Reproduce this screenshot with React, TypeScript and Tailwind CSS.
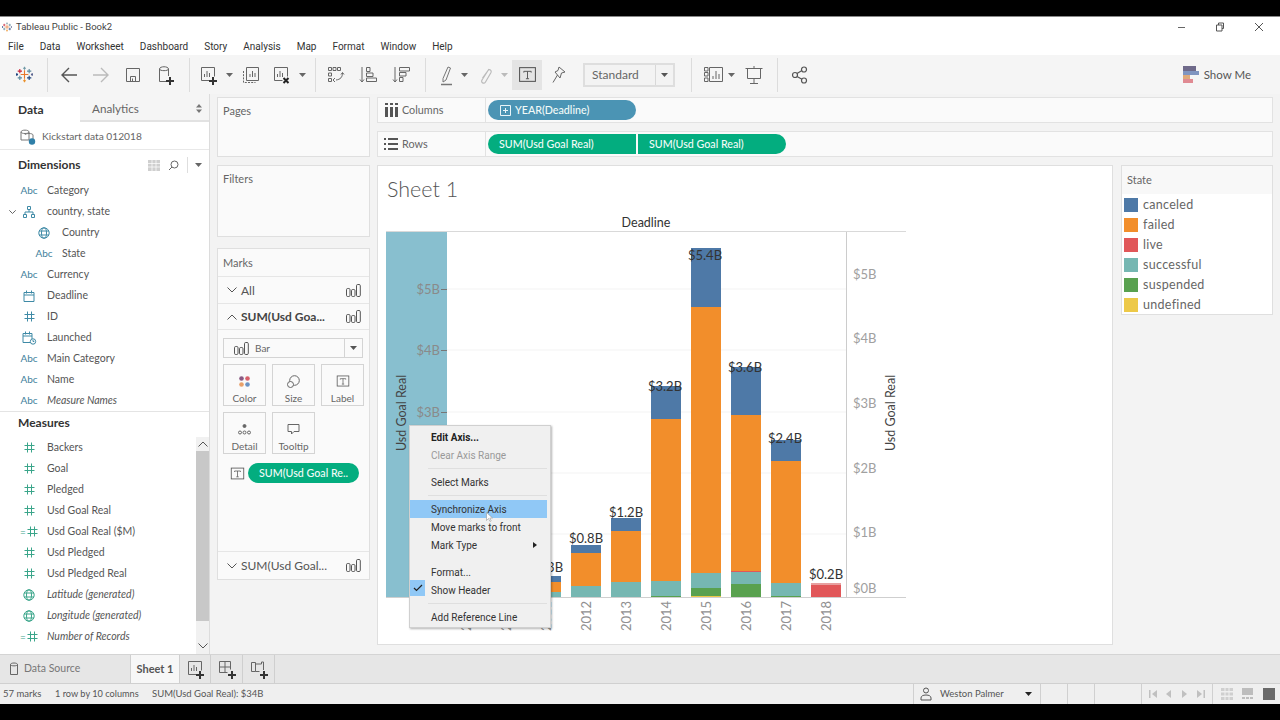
import React from "react";

const Ic = ({ w = 18, h = 18, vb = "0 0 18 18", c = "#555", sw = 1, children }: any) => (
  <svg width={w} height={h} viewBox={vb} fill="none" stroke={c} strokeWidth={sw} className="block shrink-0">{children}</svg>
);
const Caret = ({ c = "#666" }: { c?: string }) => (
  <svg width="7" height="4" viewBox="0 0 7 4" className="block"><path d="M0 0h7L3.5 4z" fill={c} /></svg>
);
const Slot = ({ w, ml = 0, className = "", children }: any) => (
  <div style={{ width: w, marginLeft: ml }} className={`flex items-center justify-center shrink-0 ${className}`}>{children}</div>
);
const Sep = ({ ml }: { ml: number }) => <div style={{ marginLeft: ml }} className="w-px h-[34px] bg-[#dcdcdc] shrink-0" />;

const TableauLogo = ({ s = 20 }: { s?: number }) => (
  <svg width={s} height={s} viewBox="0 0 20 20" className="block shrink-0" strokeWidth="1.3">
    <path d="M10 5v10M5.5 10h9" stroke="#e8762b" />
    <path d="M4.5 3.5v5M2 6h5" stroke="#c72035" />
    <path d="M15.5 3.5v5M13 6h5" stroke="#5b879b" />
    <path d="M4.5 11.5v5M2 14h5" stroke="#59879b" />
    <path d="M15.5 11.5v5M13 14h5" stroke="#1f447e" />
    <path d="M10 1v3.4M8.3 2.7h3.4" stroke="#7099a6" />
    <path d="M10 15.6V19M8.3 17.3h3.4" stroke="#eb912b" />
    <path d="M1 8.3v3.4M0 10h2.4" stroke="#1f447e" />
    <path d="M19 8.3v3.4M17.6 10H20" stroke="#5c6692" />
  </svg>
);
const Plus = ({ x, y }: { x: number; y: number }) => <path d={`M${x - 4} ${y}h8M${x} ${y - 4}v8`} stroke="#333" strokeWidth="2" />;
const NewSheet = () => (
  <Ic w={22} h={22} vb="0 0 22 22" c="#666">
    <path d="M4.5 3.5h13v9M4.5 3.5v13h8" />
    <path d="M7.5 13V10M10 13V7M12.5 13V9" />
    <Plus x={16} y={17} />
  </Ic>
);
const DupSheet = () => (
  <Ic w={22} h={22} vb="0 0 22 22" c="#666">
    <path d="M6.5 3.5h12v13h-12z" />
    <path d="M3.5 7v11.5h12" strokeDasharray="2 1.2" />
    <path d="M10 13v-3M12.5 13V7M15 13V9" />
  </Ic>
);
const ClearSheet = () => (
  <Ic w={22} h={22} vb="0 0 22 22" c="#666">
    <path d="M4.5 3.5h13v9M4.5 3.5v13h8" />
    <path d="M7.5 13v-3M10 13V7M12.5 13V9" />
    <path d="M13.5 14l5 5M18.5 14l-5 5" stroke="#222" strokeWidth="2" />
  </Ic>
);
const Swap = () => (
  <Ic w={20} h={20} vb="0 0 20 20" c="#666">
    <path d="M2.5 2.5h3v3h-3zM7 2.5h3v3H7zM11.5 2.5h3v3h-3zM2.5 8h3v3h-3zM2.5 13.5h3v3h-3z" />
    <path d="M16.5 8c0 4-2 6.500-6.500 7M9 13l-2 2 2 2M15 9.500l1.500-2 1.500 2" />
  </Ic>
);
const SortA = () => (
  <Ic w={20} h={20} vb="0 0 20 20" c="#666">
    <path d="M3 2v15M1 14.500l2 2.500 2-2.500" />
    <path d="M7.500 2.500h3.500v4H7.500zM7.500 8h6.500v3.500H7.500zM7.500 13h10v3.500h-10z" />
  </Ic>
);
const SortD = () => (
  <Ic w={20} h={20} vb="0 0 20 20" c="#666">
    <path d="M3 2v15M1 14.500l2 2.500 2-2.500" />
    <path d="M7.500 2.500h10V6h-10zM7.500 7.500h6.500V11H7.500zM7.500 12.500h3.500v4H7.500z" />
  </Ic>
);
const Highlighter = () => (
  <Ic w={20} h={22} vb="0 0 20 22" c="#777">
    <path d="M6 14.500L11 3l2.500 1L9 16l-3 2z" />
    <path d="M4 20.500h11" strokeWidth="1.500" />
  </Ic>
);
const Clip = () => (
  <Ic w={18} h={22} vb="0 0 18 22" c="#bbb" sw={1.2}>
    <path d="M13 5L6 16c-1.500 2.500 2 4.500 3.500 2L15 8.500c1-2-1.500-4-3-2L6.500 14" />
  </Ic>
);
const TBox = ({ s = 18, c = "#555" }: { s?: number; c?: string }) => (
  <svg width={s} height={s} viewBox="0 0 18 18" fill="none" className="block shrink-0">
    <rect x="1.500" y="2.500" width="15" height="13" stroke={c} />
    <path d="M5.500 6h7M9 6v7M7.500 13h3M5.500 6v1.200M12.500 6v1.200" stroke={c} strokeWidth="0.9" />
  </svg>
);
const Pin = () => (
  <Ic w={20} h={22} vb="0 0 20 22" c="#666">
    <path d="M10 3l6 5-3.500 1-1.500 5-5-6 3-1.500zM8.500 11L4 18.500" />
  </Ic>
);
const Fit = () => (
  <Ic w={24} h={20} vb="0 0 24 20" c="#666">
    <path d="M2.500 2.500h3.500v3.500H2.500zM2.500 7.500h3.500V11H2.500zM2.500 13h3.500v3.500H2.500zM7.500 2.500h13v14h-13z" />
    <path d="M11 14v-3M14 14V6M17 14V9" />
  </Ic>
);
const Present = () => (
  <Ic w={20} h={22} vb="0 0 20 22" c="#666">
    <path d="M1.500 4.500h17M3.500 4.500v10h13v-10M10 2v2.500M10 14.500v5M6 19.500h8" />
  </Ic>
);
const Share = () => (
  <Ic w={20} h={20} vb="0 0 20 20" c="#555" sw={1.200}>
    <circle cx="14" cy="4.500" r="2.500" /><circle cx="5" cy="10" r="2.500" /><circle cx="14" cy="15.500" r="2.500" />
    <path d="M7 8.500l5-3M7 11.500l5 2.800" />
  </Ic>
);
const DB = ({ c = "#666" }: { c?: string }) => (
  <Ic w={12} h={14} vb="0 0 12 14" c={c}>
    <path d="M2.500 2.500c0-2 7-2 7 0v10h-7zM2.500 2.500c0 1.800 7 1.800 7 0" />
  </Ic>
);
const SaveI = () => (
  <Ic w={18} h={18} c="#666">
    <path d="M2.500 2.500h13v13h-13zM6.500 15.500v-5h5v5M8.500 15.500v-3" />
  </Ic>
);
const NewDB = () => (
  <Ic w={22} h={22} vb="0 0 22 22" c="#666">
    <path d="M5.500 5c0-3 9-3 9 0v7M5.500 5c0 2.200 9 2.200 9 0M5.500 5v12.500h7" />
    <Plus x={16} y={17} />
  </Ic>
);
const ColsI = () => (
  <svg width="14" height="14" viewBox="0 0 14 14" className="block"><path d="M1 4h3v10H1zM6 4h3v10H6zM11 4h3v10h-3zM1 0h3v2H1zM6 0h3v2H6zM11 0h3v2h-3z" fill="#555" /></svg>
);
const RowsI = () => (
  <svg width="14" height="12" viewBox="0 0 14 12" className="block"><path d="M0 0h2v2H0zM4 0h10v2H4zM0 5h2v2H0zM4 5h10v2H4zM0 10h2v2H0zM4 10h10v2H4z" fill="#555" /></svg>
);
const BarMark = () => (
  <svg width="15" height="13" viewBox="0 0 15 13" fill="none" stroke="#555" className="block shrink-0">
    <rect x="0.500" y="4.500" width="3.500" height="8" rx="1.200" />
    <rect x="5.500" y="5.500" width="3.500" height="7" rx="1.200" />
    <rect x="10.500" y="0.500" width="3.800" height="12" rx="1.200" />
  </svg>
);
const Chev = ({ up = false }: { up?: boolean }) => (
  <svg width="10" height="6" viewBox="0 0 10 6" fill="none" stroke="#555" className="block"><path d={up ? "M0.500 5.500L5 1l4.500 4.500" : "M0.500 0.500L5 5l4.500-4.500"} /></svg>
);

const Globe = ({ c }: { c: string }) => (
  <Ic w={12} h={12} vb="0 0 12 12" c={c}>
    <circle cx="6" cy="6" r="5.200" /><ellipse cx="6" cy="6" rx="2.500" ry="5.200" /><path d="M1 4h10M1 8h10" />
  </Ic>
);
const HashI = ({ c, calc }: { c: string; calc?: boolean }) => (
  <div className="flex items-center">
    {calc && <span style={{ color: c }} className="text-[10px] leading-none mr-px">=</span>}
    <Ic w={11} h={11} vb="0 0 11 11" c={c}><path d="M3.500 0.500v10M7.500 0.500v10M0.500 3.500h10M0.500 7.500h10" /></Ic>
  </div>
);
const FieldIcon = ({ k }: { k: string }) => {
  const b = "#3f8aa6", g = "#3aa58a";
  if (k === "abc") return <span className="text-[10px] text-[#3f7f9c] leading-none pb-[2px]">Abc</span>;
  if (k === "geo") return <Globe c={b} />;
  if (k === "geom") return <Globe c={g} />;
  if (k === "date")
    return <Ic w={12} h={12} vb="0 0 12 12" c={b}><path d="M1 2.500h10v9H1zM1 5h10M3.500 0.500v3M8.500 0.500v3" /></Ic>;
  if (k === "datetime")
    return <Ic w={15} h={14} vb="0 0 15 14" c={b}><path d="M1 2.500h9v9H1zM1 5h9M3.500 0.500v3M7.500 0.500v3" /><circle cx="11" cy="10.500" r="2.700" fill="#fff" /><path d="M11 9v1.500h1.300" /></Ic>;
  if (k === "hier")
    return <Ic w={12} h={12} vb="0 0 12 12" c={b}><path d="M4.500 0.500h3v3h-3zM0.500 8.500h3v3h-3zM8.500 8.500h3v3h-3zM6 3.500V6M2 8.500V6h8v2.500" /></Ic>;
  if (k === "hash") return <HashI c={b} />;
  if (k === "m") return <HashI c={g} />;
  return <HashI c={g} calc />;
};
const Field = ({ k, t, it, sub, chev }: { k: string; t: string; it?: boolean; sub?: boolean; chev?: boolean }) => (
  <div className="flex items-center h-[21px]">
    <div className="w-[11px] ml-[7px] flex justify-center">{chev && <svg width="7" height="4" viewBox="0 0 7 4" fill="none" stroke="#666"><path d="M0.300 0.300L3.500 3.500 6.700 0.300" /></svg>}</div>
    <div style={{ marginLeft: sub ? 15 : 0 }} className="w-[22px] flex justify-center">
      <FieldIcon k={k} />
    </div>
    <span className={`ml-[7px] text-[10.500px] text-[#555] whitespace-nowrap ${it ? "italic" : ""}`}>{t}</span>
  </div>
);

const Pill = ({ c, w, pl, r, children }: any) => (
  <div style={{ width: w, background: c, paddingLeft: pl }} className={`h-[20px] flex items-center text-[#f2fbf8] text-[10.700px] font-medium whitespace-nowrap ${r}`}>{children}</div>
);

const MarkCard = ({ t, icon }: { t: string; icon: React.ReactNode }) => (
  <div className="w-[43px] h-[42px] border border-[#d4d4d4] flex flex-col items-center pt-[8px]">
    <div className="h-[16px] flex items-center">{icon}</div>
    <span className="text-[10px] text-[#666] mt-[4px] leading-none">{t}</span>
  </div>
);
const MarkRow = ({ up, t, bold, h, line = true }: any) => (
  <div style={{ height: h }} className={`flex items-center pl-[9px] pr-[8px] ${line ? "border-b border-[#e6e6e6]" : ""}`}>
    <Chev up={up} />
    <span className={`ml-[4px] pt-px flex-1 text-[12px] whitespace-nowrap ${bold ? "font-bold text-[#444]" : "text-[#555]"}`}>{t}</span>
    <BarMark />
  </div>
);
const MenuItem = ({ t, b, dis, hi, check, arrow }: any) => (
  <div className="relative flex items-center h-[18px] pl-[21px]">
    {hi && <div className="absolute left-0 right-[3px] top-0 bottom-0 bg-[#90c8f6]" />}
    {check && (
      <div className="absolute left-0 top-[-1px] w-[15px] h-[16px] bg-[#90c8f6] flex items-center justify-center">
        <svg width="10" height="8" viewBox="0 0 10 8" fill="none" stroke="#222" strokeWidth="1.200"><path d="M1 4l2.500 2.500L9 1" /></svg>
      </div>
    )}
    <span className={`relative text-[10px] font-['Roboto',sans-serif] ${b ? "font-bold text-[#222]" : dis ? "text-[#999]" : "text-[#333]"}`}>{t}</span>
    {arrow && <svg className="absolute right-[13px] top-[6px]" width="4" height="6" viewBox="0 0 4 6"><path d="M0 0l4 3-4 3z" fill="#222" /></svg>}
  </div>
);
const MenuSep = () => <div className="h-[9px] flex items-center ml-[18px] mr-[3px]"><div className="h-px w-full bg-[#dfdfdf]" /></div>;
const MenuGap = () => <div className="h-[9px]" />;

const C = { b: "#4e79a7", o: "#f28e2b", r: "#e15759", t: "#76b7b2", g: "#59a14f", y: "#edc948" };
const bars: { x: number; segs: [number, number, string][] }[] = [
  { x: 531, segs: [[576, 582, C.b], [582, 592, C.o], [592, 597, C.t]] },
  { x: 571, segs: [[545, 553, C.b], [553, 586, C.o], [586, 597, C.t]] },
  { x: 611, segs: [[518, 531, C.b], [531, 582, C.o], [582, 597, C.t]] },
  { x: 651, segs: [[386, 419, C.b], [419, 581, C.o], [581, 596, C.t], [596, 597, C.g]] },
  { x: 691, segs: [[248, 307, C.b], [307, 573, C.o], [573, 588, C.t], [588, 596, C.g], [596, 597, C.y]] },
  { x: 731, segs: [[367, 415, C.b], [415, 571, C.o], [571, 572, C.r], [572, 584, C.t], [584, 597, C.g]] },
  { x: 771, segs: [[440, 461, C.b], [461, 583, C.o], [583, 596, C.t], [596, 597, C.g]] },
  { x: 811, segs: [[583, 585, "#e8a0a0"], [585, 597, C.r]] },
];
const labels: [string, number, number][] = [
  ["$0.3B", 546, 572], ["$0.8B", 586, 543], ["$1.2B", 626, 517], ["$3.2B", 665, 391], ["$5.4B", 705, 260],
  ["$3.6B", 745, 372], ["$2.4B", 785, 443], ["$0.2B", 826, 579],
];
const years = [2009, 2010, 2011, 2012, 2013, 2014, 2015, 2016, 2017, 2018];

const Chart = () => (
  <svg width="734" height="430" viewBox="378 214 734 430" className="block font-['Lato',sans-serif]">
    <rect x="386" y="232" width="61" height="365" fill="#88bfcf" />
    {[289, 350, 412, 473, 534].map((y) => <path key={y} d={`M447 ${y}H846`} stroke="#f3f3f3" />)}
    <path d="M386 231.500H906" stroke="#d9d9d9" />
    <path d="M386 597.500H906" stroke="#cfcfcf" />
    <path d="M846.500 232V597" stroke="#cccccc" />
    <text x="646" y="227" textAnchor="middle" fontSize="12.500" fill="#333">Deadline</text>
    {[["$5B", 289], ["$4B", 350], ["$3B", 412]].map(([t, y]) => (
      <g key={t as string}>
        <text x="440" y={(y as number) + 5} textAnchor="end" fontSize="13" fill="#8a8a8a">{t}</text>
        <path d={`M441 ${(y as number) + 0.5}h6`} stroke="#777" />
      </g>
    ))}
    <text transform="translate(406 413) rotate(-90)" textAnchor="middle" fontSize="12.500" fill="#444">Usd Goal Real</text>
    <text transform="translate(895 413) rotate(-90)" textAnchor="middle" fontSize="12.500" fill="#444">Usd Goal Real</text>
    {[["$5B", 274], ["$4B", 338], ["$3B", 403], ["$2B", 468], ["$1B", 532], ["$0B", 588]].map(([t, y]) => (
      <text key={t as string} x="853" y={(y as number) + 5} fontSize="13" fill="#a0a0a0">{t}</text>
    ))}
    {bars.map((b) => b.segs.map(([a, z, c], i) => <rect key={`${b.x}-${i}`} x={b.x} y={a} width="30" height={z - a} fill={c} />))}
    {labels.map(([t, x, y]) => <text key={t} x={x} y={y} textAnchor="middle" fontSize="13" fill="#333">{t}</text>)}
    {years.map((y, i) => (
      <text key={y} transform={`translate(${471 + i * 40} 631) rotate(-90)`} fontSize="13" fill="#909090">{y}</text>
    ))}
  </svg>
);

const legend: [string, string][] = [["canceled", C.b], ["failed", C.o], ["live", C.r], ["successful", C.t], ["suspended", C.g], ["undefined", C.y]];

const Panel = ({ t, h, mt = 0 }: { t: string; h: number; mt?: number }) => (
  <div style={{ height: h, marginTop: mt }} className="border border-[#dfdfdf] bg-[#fafafa] px-[5px] pt-[5px] text-[11px] text-[#666]">{t}</div>
);
const Shelf = ({ icon, t, children, mt = 0 }: any) => (
  <div style={{ marginTop: mt }} className="h-[26px] border border-[#e2e2e2] bg-[#fafafa] flex items-center">
    <div className="w-[108px] h-full flex items-center pl-[6px] border-r border-[#e2e2e2] shrink-0">
      <div className="w-[18px]">{icon}</div>
      <span className="text-[10.800px] text-[#666]">{t}</span>
    </div>
    <div className="pl-[2px] flex">{children}</div>
  </div>
);

export default function App() {
  return (
    <div className="w-[1280px] h-[720px] bg-black flex flex-col overflow-hidden font-['Lato','Open_Sans',sans-serif]">
      <div className="h-[16px] shrink-0" />
      {/* title */}
      <div className="h-[21px] bg-white border-t border-[#888] flex items-center pl-[2px] shrink-0 font-['Roboto',sans-serif]">
        <TableauLogo s={10} />
        <span className="ml-[4px] text-[9.500px] text-[#444]">Tableau Public - Book2</span>
        <div className="ml-auto flex items-center">
          <Ic w={10} h={10} vb="0 0 10 10" c="#666"><path d="M1 5.500h7" /></Ic>
          <div className="ml-[28px]"><Ic w={10} h={10} vb="0 0 10 10" c="#555"><path d="M1.500 3h5.500v6H1.500zM3.500 3V1h5v5.500H7" /></Ic></div>
          <div className="ml-[29px] mr-[16px]"><Ic w={10} h={10} vb="0 0 10 10" c="#555"><path d="M1 1l8 8M9 1L1 9" /></Ic></div>
        </div>
      </div>
      {/* menu */}
      <div className="h-[18px] bg-white flex items-center pl-[8px] gap-[16px] text-[10px] text-[#333] shrink-0 font-['Roboto',sans-serif]">
        {["File", "Data", "Worksheet", "Dashboard", "Story", "Analysis", "Map", "Format", "Window", "Help"].map((m) => <span key={m}>{m}</span>)}
      </div>
      {/* toolbar */}
      <div className="h-[39px] bg-[#f5f5f5] flex items-center pl-[12px] shrink-0">
        <Slot w={24}><TableauLogo s={17} /></Slot>
        <Sep ml={11} />
        <Slot w={32} ml={5}>
          <Ic w={20} h={18} vb="0 0 20 18" c="#555" sw={1.400}><path d="M18 9H3M10 2L3 9l7 7" /></Ic>
        </Slot>
        <Slot w={32}><Ic w={20} h={18} vb="0 0 20 18" c="#bbb" sw={1.400}><path d="M2 9h15M10 2l7 7-7 7" /></Ic></Slot>
        <Slot w={32}><SaveI /></Slot>
        <Slot w={32}><NewDB /></Slot>
        <Sep ml={8} />
        <Slot w={24} ml={6}><NewSheet /></Slot>
        <Slot w={10} ml={4}><Caret /></Slot>
        <Slot w={24} ml={5}><DupSheet /></Slot>
        <Slot w={24} ml={6}><ClearSheet /></Slot>
        <Slot w={10} ml={4}><Caret /></Slot>
        <Sep ml={8} />
        <Slot w={24} ml={8}><Swap /></Slot>
        <Slot w={24} ml={9}><SortA /></Slot>
        <Slot w={24} ml={9}><SortD /></Slot>
        <Sep ml={11} />
        <Slot w={24} ml={9}><Highlighter /></Slot>
        <Slot w={10}><Caret /></Slot>
        <Slot w={24} ml={4}><Clip /></Slot>
        <Slot w={10} ml={2}><Caret c="#bbb" /></Slot>
        <Slot w={30} ml={3} className="h-[30px] bg-[#e4e4e4]"><TBox s={19} /></Slot>
        <Slot w={24} ml={5}><Pin /></Slot>
        <div className="ml-[12px] w-[92px] h-[24px] border-2 border-[#dedede] bg-[#f3f3f3] flex items-center">
          <span className="flex-1 pl-[7px] text-[12px] text-[#666]">Standard</span>
          <div className="w-[18px] h-full border-l border-[#d8d8d8] flex items-center justify-center"><Caret c="#555" /></div>
        </div>
        <Sep ml={16} />
        <Slot w={24} ml={10}><Fit /></Slot>
        <Slot w={10}><Caret /></Slot>
        <Slot w={24} ml={6}><Present /></Slot>
        <Sep ml={11} />
        <Slot w={24} ml={10}><Share /></Slot>
        <div className="ml-auto mr-[29px] flex items-center">
          <div className="w-[16px] flex flex-col">
            <div className="h-[5px] w-[13px] bg-[#6f6a8a]" />
            <div className="h-[4px] w-[16px] bg-[#8095c0]" />
            <div className="h-[4px] w-[7px] bg-[#e0aa7a]" />
            <div className="h-[4px] w-[10px] bg-[#e08a92]" />
          </div>
          <span className="ml-[5px] text-[11.500px] text-[#555]">Show Me</span>
        </div>
      </div>
      {/* main */}
      <div className="h-[560px] bg-[#f3f3f3] flex shrink-0">
        {/* data pane */}
        <div className="w-[210px] bg-white border-r border-[#dcdcdc] flex flex-col shrink-0">
          <div className="h-[28px] flex bg-[#f5f5f5] pt-[3px]">
            <div className="w-[80px] bg-white flex items-center pl-[18px] text-[12px] font-bold text-[#333]">Data</div>
            <div className="flex-1 flex items-center pl-[12px] border-b-2 border-[#e2e2e2] text-[11.700px] text-[#666]">
              <span className="flex-1">Analytics</span>
              <svg className="mr-[7px]" width="6" height="9" viewBox="0 0 6 9"><path d="M0 3.500L3 0l3 3.500zM0 5.500L3 9l3-3.500z" fill="#777" /></svg>
            </div>
          </div>
          <div className="h-[28px] flex items-center pl-[19px] pt-[3px] border-b border-[#e8e8e8]">
            <Ic w={18} h={16} vb="0 0 18 16" c="#777">
              <path d="M2 3c0-2.500 8-2.500 8 0v8H2zM2 3c0 2 8 2 8 0" />
              <path d="M6 6c0-2 8-2 8 0v6" />
              <circle cx="13" cy="12.500" r="3.200" fill="#2f7fa8" stroke="none" />
            </Ic>
            <span className="ml-[5px] text-[10.200px] text-[#666]">Kickstart data 012018</span>
          </div>
          <div className="h-[30px] flex items-center pl-[18px]">
            <span className="text-[12px] font-bold text-[#333] flex-1">Dimensions</span>
            <svg width="12" height="11" viewBox="0 0 12 11" className="mr-[8px]"><path d="M0 0h12v11H0z" fill="#cfcfcf" /><path d="M4 0v11M8 0v11M0 3.500h12M0 7h12" stroke="#fff" strokeWidth="0.700" /></svg>
            <Ic w={11} h={11} vb="0 0 11 11" c="#666"><circle cx="6.500" cy="4.500" r="3.500" /><path d="M4 7L1 10" /></Ic>
            <div className="w-px h-[16px] bg-[#dedede] ml-[8px]" />
            <div className="ml-[7px] mr-[7px]"><Caret c="#666" /></div>
          </div>
          <Field k="abc" t="Category" />
          <Field k="hier" t="country, state" chev />
          <Field k="geo" t="Country" sub />
          <Field k="abc" t="State" sub />
          <Field k="abc" t="Currency" />
          <Field k="date" t="Deadline" />
          <Field k="hash" t="ID" />
          <Field k="datetime" t="Launched" />
          <Field k="abc" t="Main Category" />
          <Field k="abc" t="Name" />
          <Field k="abc" t="Measure Names" it />
          <div className="h-[26px] border-t border-[#e4e4e4] flex items-center pl-[18px] pb-[3px] text-[12px] font-bold text-[#333]">Measures</div>
          <div className="flex-1 flex">
            <div className="flex-1">
              <Field k="m" t="Backers" />
              <Field k="m" t="Goal" />
              <Field k="m" t="Pledged" />
              <Field k="m" t="Usd Goal Real" />
              <Field k="calc" t="Usd Goal Real ($M)" />
              <Field k="m" t="Usd Pledged" />
              <Field k="m" t="Usd Pledged Real" />
              <Field k="geom" t="Latitude (generated)" it />
              <Field k="geom" t="Longitude (generated)" it />
              <Field k="calc" t="Number of Records" it />
            </div>
            <div className="w-[13px] flex flex-col">
              <div className="h-[14px] flex items-center justify-center bg-[#f1f1f1]"><Chev up /></div>
              <div className="h-[170px] bg-[#c8c8c8]" />
              <div className="flex-1 bg-[#f1f1f1]" />
              <div className="h-[16px] flex items-center justify-center bg-[#f1f1f1]"><Chev /></div>
            </div>
          </div>
        </div>
        {/* cards */}
        <div className="w-[153px] ml-[7px] pt-[3px] shrink-0">
          <Panel t="Pages" h={60} />
          <Panel t="Filters" h={72} mt={8} />
          <div className="h-[332px] mt-[11px] border border-[#dfdfdf] bg-[#fafafa] flex flex-col">
            <div className="h-[28px] flex items-center pl-[5px] pt-px border-b border-[#e6e6e6] text-[11px] text-[#666]">Marks</div>
            <MarkRow t="All" h={27} />
            <MarkRow up t="SUM(Usd Goa..." bold h={26} />
            <div className="px-[5px] pt-[8px] flex flex-col">
              <div className="h-[20px] w-[140px] border border-[#d4d4d4] flex items-center pl-[10px]">
                <BarMark />
                <span className="ml-[6px] text-[10px] text-[#666] flex-1">Bar</span>
                <div className="w-[18px] h-full border-l border-[#d4d4d4] flex items-center justify-center"><Caret c="#555" /></div>
              </div>
              <div className="flex gap-[6px] mt-[6px]">
                <MarkCard t="Color" icon={<svg width="11" height="11" viewBox="0 0 11 11"><circle cx="2.500" cy="2.500" r="2.300" fill="#8a5a83" /><circle cx="8.500" cy="2.500" r="2.300" fill="#d9606a" /><circle cx="2.500" cy="8.500" r="2.300" fill="#e8a06a" /><circle cx="8.500" cy="8.500" r="2.300" fill="#6b93c4" /></svg>} />
                <MarkCard t="Size" icon={<Ic w={13} h={13} vb="0 0 13 13" c="#666"><circle cx="7.500" cy="5.500" r="4.800" /><circle cx="3.500" cy="9.500" r="3" fill="#fafafa" /></Ic>} />
                <MarkCard t="Label" icon={<TBox s={14} />} />
              </div>
              <div className="flex gap-[6px] mt-[6px]">
                <MarkCard t="Detail" icon={<svg width="13" height="11" viewBox="0 0 13 11" fill="none" stroke="#666"><circle cx="6.500" cy="2" r="1.500" fill="#666" /><circle cx="2" cy="8.500" r="1.500" /><circle cx="6.500" cy="8.500" r="1.500" /><circle cx="11" cy="8.500" r="1.500" /></svg>} />
                <MarkCard t="Tooltip" icon={<Ic w={13} h={13} vb="0 0 13 13" c="#666"><path d="M1 1.500h11v7H7L4.500 11V8.500H1z" /></Ic>} />
              </div>
              <div className="flex items-center mt-[9px] ml-[7px]">
                <TBox s={15} />
                <div className="ml-[3px] w-[111px] h-[20px] rounded-full bg-[#03ad7f] text-[#f2fbf8] text-[10.700px] font-medium flex items-center pl-[11px] whitespace-nowrap">SUM(Usd Goal Re..</div>
              </div>
            </div>
            <div className="mt-auto border-t border-[#e6e6e6]"><MarkRow t="SUM(Usd Goal..." h={27} line={false} /></div>
          </div>
        </div>
        {/* right */}
        <div className="ml-[7px] pt-[3px] w-[896px] shrink-0">
          <Shelf icon={<ColsI />} t="Columns">
            <Pill c="#4b94b4" w={148} pl={12} r="rounded-full">
              <svg width="11" height="11" viewBox="0 0 11 11" fill="none" stroke="#e8f4f8"><path d="M0.500 0.500h10v10h-10zM3 5.500h5M5.500 3v5" /></svg>
              <span className="ml-[4px]">YEAR(Deadline)</span>
            </Pill>
          </Shelf>
          <Shelf icon={<RowsI />} t="Rows" mt={8}>
            <Pill c="#03ad7f" w={148} pl={11} r="rounded-l-full">SUM(Usd Goal Real)</Pill>
            <div className="w-[2px]" />
            <Pill c="#03ad7f" w={148} pl={11} r="rounded-r-full">SUM(Usd Goal Real)</Pill>
          </Shelf>
          <div className="flex mt-[8px]">
            <div className="relative w-[736px] h-[480px] bg-white border border-[#dfdfdf]">
              <div className="h-[48px] pl-[9px] pt-[9px] text-[21.500px] leading-[28px] font-light text-[#555]">Sheet 1</div>
              <Chart />
              <div className="absolute left-[31px] top-[259px] w-[142px] h-[203px] bg-[#f0f0f0] border border-[#d0d0d0] shadow-[1px_1px_2px_rgba(0,0,0,0.3)] pt-[2px]">
                <MenuItem t="Edit Axis..." b />
                <MenuItem t="Clear Axis Range" dis />
                <MenuSep />
                <MenuItem t="Select Marks" />
                <MenuSep />
                <MenuItem t="Synchronize Axis" hi />
                <MenuItem t="Move marks to front" />
                <MenuItem t="Mark Type" arrow />
                <MenuGap />
                <MenuItem t="Format..." />
                <MenuItem t="Show Header" check />
                <MenuSep />
                <MenuItem t="Add Reference Line" />
                <svg className="absolute left-[76px] top-[86px]" width="7" height="10" viewBox="0 0 7 10"><path d="M0.500 0.500v8l2-2 1.500 3 1.200-.6-1.400-2.900h2.700z" fill="#fff" stroke="#888" strokeWidth="0.500" /></svg>
              </div>
            </div>
            <div className="ml-[8px] w-[152px] h-[150px] bg-white border border-[#dfdfdf]">
              <div className="h-[28px] bg-[#f8f8f8] flex items-center pl-[5px] text-[11px] text-[#666]">State</div>
              <div className="pl-[2px] pt-[1px]">
                {legend.map(([t, c]) => (
                  <div key={t} className="h-[20px] flex items-center">
                    <div style={{ background: c }} className="w-[14px] h-[14px]" />
                    <span className="ml-[5px] text-[12.500px] tracking-[0.3px] text-[#666]">{t}</span>
                  </div>
                ))}
              </div>
            </div>
          </div>
        </div>
      </div>
      {/* tabs */}
      <div className="h-[29px] bg-[#e6e6e6] border-t border-[#d4d4d4] flex shrink-0">
        <div className="w-[131px] flex items-center pl-[8px] border-r border-[#cfcfcf]">
          <DB />
          <span className="ml-[4px] text-[10.500px] text-[#777]">Data Source</span>
        </div>
        <div className="w-[48px] bg-[#f7f7f7] flex items-center justify-center text-[11px] font-bold text-[#555]">Sheet 1</div>
        <div className="w-[32px] border-x border-[#cfcfcf] flex items-center justify-center"><NewSheet /></div>
        <div className="w-[32px] border-r border-[#cfcfcf] flex items-center justify-center">
          <Ic w={22} h={22} vb="0 0 22 22" c="#666"><path d="M3.500 3.500h11v8M3.500 3.500v11h8M9 3.500v11M3.500 9h11" /><Plus x={16} y={17} /></Ic>
        </div>
        <div className="w-[32px] border-r border-[#cfcfcf] flex items-center justify-center">
          <Ic w={22} h={22} vb="0 0 22 22" c="#666"><path d="M3.500 4.500h4v9h-4zM7.500 6h6v-2h2v8M7.500 13.500h4" /><Plus x={16} y={17} /></Ic>
        </div>
      </div>
      {/* status */}
      <div className="h-[21px] bg-[#efefef] border-t border-[#d0d0d0] flex items-center text-[9.500px] text-[#555] shrink-0">
        <span className="ml-[3px] w-[52px]">57 marks</span>
        <span className="w-[97px] text-[9.200px]">1 row by 10 columns</span>
        <span>SUM(Usd Goal Real): $34B</span>
        <div className="ml-auto flex h-full">
          <div className="w-[127px] border-l border-[#d0d0d0] flex items-center pl-[6px]">
            <Ic w={12} h={14} vb="0 0 12 14" c="#555"><circle cx="6" cy="3.500" r="2.500" /><path d="M1 13v-2c0-2 2-3 5-3s5 1 5 3v2z" /></Ic>
            <span className="ml-[8px] flex-1 text-[#555]">Weston Palmer</span>
            <div className="mr-[8px]"><Caret c="#222" /></div>
          </div>
          <div className="w-[27px] border-l border-[#d0d0d0]" />
          <div className="w-[27px] border-l border-[#d0d0d0]" />
          <div className="w-[47px] border-l border-[#d0d0d0]" />
          <div className="w-[71px] border-l border-[#d0d0d0] flex items-center justify-center gap-[8px]">
            {["M0 0h1.500v8H0zM8 0v8L3 4z", "M6 0v8L1 4z", "M1 0v8l5-4z", "M0 0v8l5-4zM6.500 0H8v8H6.500z"].map((d) => (
              <svg key={d} width="8" height="8" viewBox="0 0 8 8"><path d={d} fill="#c0c0c0" /></svg>
            ))}
          </div>
          <div className="w-[68px] border-l border-[#d0d0d0] flex items-center pl-[8px]">
            <svg width="12" height="12" viewBox="0 0 12 12"><path d="M0 0h12v3H0zM0 4.500h12v3H0zM0 9h12v3H0z" fill="#cfcfcf" /><path d="M4 0v12M8 0v12" stroke="#efefef" /></svg>
            <svg className="ml-[9px]" width="12" height="12" viewBox="0 0 12 12"><path d="M0 0h11v7H0zM0 9h3v2H0zM4 9h3v2H4zM8 9h3v2H8z" fill="#bdbdbd" /></svg>
            <div className="ml-[9px] w-[12px] h-[12px] bg-[#6a6a6a]" />
          </div>
        </div>
      </div>
      <div className="flex-1" />
    </div>
  );
}
